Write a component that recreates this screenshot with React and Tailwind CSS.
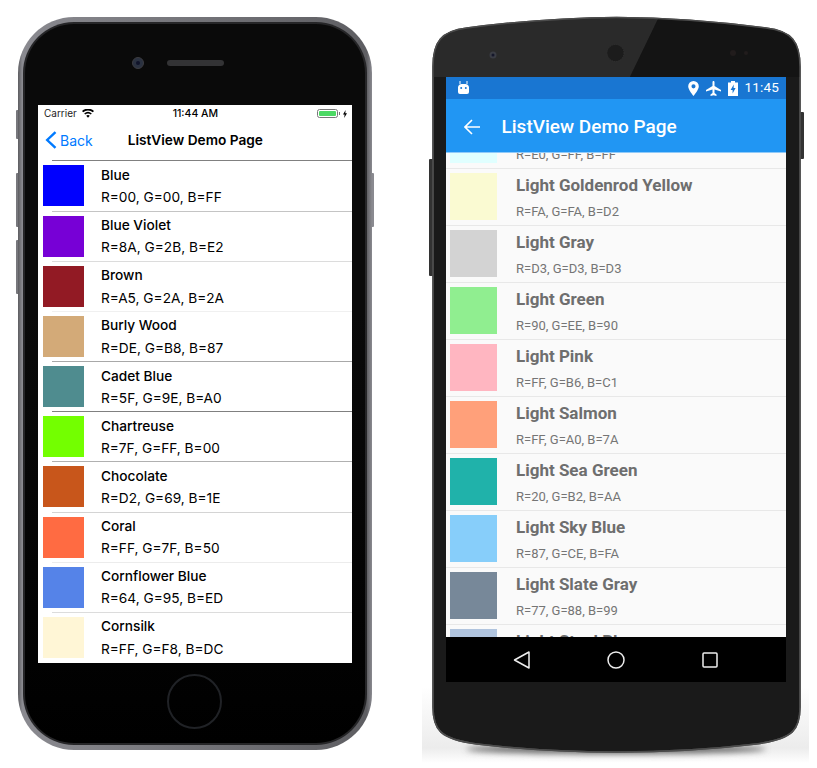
import React from "react";

const iosColors = [
  { name: "Blue", rgb: "R=00, G=00, B=FF", color: "#0000ff", line: "#c4c4c4" },
  { name: "Blue Violet", rgb: "R=8A, G=2B, B=E2", color: "#7700d6", line: "#dcdcdc" },
  { name: "Brown", rgb: "R=A5, G=2A, B=2A", color: "#921a24", line: "#f0f0f0" },
  { name: "Burly Wood", rgb: "R=DE, G=B8, B=87", color: "#d3aa78", line: "#a8a8a8" },
  { name: "Cadet Blue", rgb: "R=5F, G=9E, B=A0", color: "#4f8c8f", line: "#808080" },
  { name: "Chartreuse", rgb: "R=7F, G=FF, B=00", color: "#73ff00", line: "#b0b0b0" },
  { name: "Chocolate", rgb: "R=D2, G=69, B=1E", color: "#c8561b", line: "#d4d4d4" },
  { name: "Coral", rgb: "R=FF, G=7F, B=50", color: "#ff6b42", line: "#ececec" },
  { name: "Cornflower Blue", rgb: "R=64, G=95, B=ED", color: "#5583e8", line: "#dcdcdc" },
  { name: "Cornsilk", rgb: "R=FF, G=F8, B=DC", color: "#fff6d6", line: "#ffffff" },
];

const androidColors = [
  { name: "Light Cyan", rgb: "R=E0, G=FF, B=FF", color: "#e0ffff" },
  { name: "Light Goldenrod Yellow", rgb: "R=FA, G=FA, B=D2", color: "#fafad2" },
  { name: "Light Gray", rgb: "R=D3, G=D3, B=D3", color: "#d3d3d3" },
  { name: "Light Green", rgb: "R=90, G=EE, B=90", color: "#90ee90" },
  { name: "Light Pink", rgb: "R=FF, G=B6, B=C1", color: "#ffb6c1" },
  { name: "Light Salmon", rgb: "R=FF, G=A0, B=7A", color: "#ffa07a" },
  { name: "Light Sea Green", rgb: "R=20, G=B2, B=AA", color: "#20b2aa" },
  { name: "Light Sky Blue", rgb: "R=87, G=CE, B=FA", color: "#87cefa" },
  { name: "Light Slate Gray", rgb: "R=77, G=88, B=99", color: "#778899" },
  { name: "Light Steel Blue", rgb: "R=B0, G=C4, B=DE", color: "#b0c4de" },
];

function IosRow({ item }) {
  return (
    <div className="h-[50.17px] flex flex-col shrink-0">
      <div className="flex-1 flex items-start pl-[5px] pt-[4px]">
        <div className="w-[41px] h-[41px] shrink-0" style={{ backgroundColor: item.color }} />
        <div className="ml-[17px] mt-[-0.5px] flex flex-col text-black font-['Inter',sans-serif]">
          <span className="text-[13.7px] leading-[20px] font-medium">{item.name}</span>
          <span className="text-[13.7px] leading-[20px] mt-[2.3px]">{item.rgb}</span>
        </div>
      </div>
      <div className="h-px ml-[14px]" style={{ backgroundColor: item.line }} />
    </div>
  );
}

function IosStatusBar() {
  return (
    <div className="relative h-[20px] flex items-center pb-[2px] pl-[6px] pr-[5px] text-[10px] font-['Inter',sans-serif] text-black">
      <span className="text-[#222]">Carrier</span>
      <svg className="ml-[5px]" width="12" height="9" viewBox="0 0 12 9" fill="black">
        <path d="M6 8.800 4.200 6.700a2.700 2.700 0 0 1 3.600 0zM3.200 5.600 2.200 4.400a5.800 5.800 0 0 1 7.600 0L8.800 5.600a4.300 4.300 0 0 0-5.600 0zM1.200 3.300 0 2a8.800 8.800 0 0 1 12 0l-1.200 1.300a7.200 7.200 0 0 0-9.600 0z" />
      </svg>
      <span className="flex-1 text-center text-[10.5px] font-medium pr-[20px]">11:44 AM</span>
      <div className="w-[21px] h-[9px] border border-[#777] rounded-[2.5px] p-px">
        <div className="w-full h-full bg-[#4cd964] rounded-[1px]" />
      </div>
      <div className="w-px h-[3px] bg-[#777] ml-px" />
      <svg className="ml-[3px]" width="4" height="8" viewBox="0 0 4 8" fill="black">
        <path d="M2.600 0 0 4.600h1.600L1.200 8 4 3.300H2.300z" />
      </svg>
    </div>
  );
}

function IosNav() {
  return (
    <div className="relative h-[36px] pb-[5px] flex items-center font-['Inter',sans-serif]">
      <svg className="ml-[7px]" width="12" height="18" viewBox="0 0 12 18" fill="none" stroke="#007aff" strokeWidth="2.4">
        <path d="M10.500 1.200 2.200 9l8.300 7.800" />
      </svg>
      <span className="ml-[3px] text-[14px] text-[#007aff]">Back</span>
      <span className="ml-[35px] text-[13.7px] font-semibold text-black">ListView Demo Page</span>
    </div>
  );
}

function IPhone() {
  return (
    <div className="relative w-[354px] h-[733px] shrink-0">
      {/* side buttons */}
      <div className="absolute left-[-2px] top-[93px] w-[3px] h-[29px] bg-[#77777c] rounded-l-[1px]" />
      <div className="absolute left-[-2px] top-[156px] w-[3px] h-[54px] bg-[#77777c] rounded-l-[1px]" />
      <div className="absolute left-[-2px] top-[223px] w-[3px] h-[54px] bg-[#77777c] rounded-l-[1px]" />
      <div className="absolute right-[-2px] top-[156px] w-[3px] h-[54px] bg-[#8a8a90] rounded-r-[1px]" />

      <div className="relative h-full rounded-[56px] p-[5px] bg-[linear-gradient(to_right,#5c5c60,#8a8a90_1.2%,#5e5e62_98.5%,#8a8a90)]">
        <div className="h-full rounded-[51px] p-[2px] bg-[#262628]">
          <div className="h-full rounded-[49px] bg-[linear-gradient(to_bottom,#0a0a0a,#0a0a0a_40%,#000)] pt-[81px] pl-[13px] pr-[13px] flex flex-col">
            <div className="h-[558px] bg-white overflow-hidden flex flex-col shrink-0">
              <IosStatusBar />
              <IosNav />
              <div className="h-px ml-[14px] bg-[#808080]" />
              <div className="flex flex-col">
                {iosColors.map((c) => (
                  <IosRow key={c.name} item={c} />
                ))}
              </div>
            </div>
            {/* home button */}
            <div className="mt-[11px] w-[55px] h-[55px] rounded-full border-2 border-[#202226] ml-[129px]" />
          </div>
        </div>
      </div>

      {/* camera and speaker */}
      <div className="absolute left-[114px] top-[40px] w-[12px] h-[12px] rounded-full bg-[#2a3140] border border-[#3c3c40] flex items-center justify-center">
        <div className="w-[4px] h-[4px] rounded-full bg-[#10142a]" />
      </div>
      <div className="absolute left-[149px] top-[43px] w-[57px] h-[6px] rounded-full bg-[#333335]" />
    </div>
  );
}

function AndroidRow({ item }) {
  return (
    <div className="h-[57px] border-t border-[#e8e8e8] shrink-0 flex items-start pl-[4.5px] pt-[4px]">
      <div className="w-[47px] h-[47px] shrink-0" style={{ backgroundColor: item.color }} />
      <div className="ml-[19px] flex flex-col font-['Roboto',sans-serif]">
        <span className="text-[17px] leading-[24px] font-bold text-[#6e6e6e] whitespace-nowrap">{item.name}</span>
        <span className="text-[13px] leading-[18px] mt-[6px] text-[#757575] whitespace-nowrap">{item.rgb}</span>
      </div>
    </div>
  );
}

function AndroidFrame() {
  const outline =
    "M0 50C0 25 8 14 34 11Q110 1 183.500 .5Q257 1 333 11C359 14 367 25 367 50V690C367 712 361 722 323 727Q257 735 183.500 735Q110 735 44 727C6 722 0 712 0 690Z";
  return (
    <svg className="absolute left-0 top-0 overflow-visible" width="367" height="735" viewBox="0 0 367 735">
      <defs>
        <clipPath id="bodyClip">
          <path d={outline} />
        </clipPath>
        <linearGradient id="fade" x1="0" y1="0" x2="0" y2="1">
          <stop offset="0" stopColor="#ffffff" />
          <stop offset="0.8" stopColor="#ececec" />
          <stop offset="1" stopColor="#ffffff" />
        </linearGradient>
        <filter id="blur" x="-20%" y="-100%" width="140%" height="300%">
          <feGaussianBlur stdDeviation="3" />
        </filter>
      </defs>
      <rect x="-11" y="670" width="387" height="76" fill="url(#fade)" />
      <ellipse cx="183" cy="732" rx="150" ry="5" fill="#666" filter="url(#blur)" />
      <path d={outline} fill="#1a1a1a" stroke="#4c4c4c" strokeWidth="1.5" />
      <polygon points="0,0 226,0 197,60 0,60" fill="#2a2a2a" clipPath="url(#bodyClip)" />
      <polygon points="226,0 367,0 367,60 197,60" fill="#141414" clipPath="url(#bodyClip)" />
      <path d={outline} fill="none" stroke="#4c4c4c" strokeWidth="1.5" />
      <circle cx="60" cy="38" r="3.5" fill="#3a3c44" />
      <circle cx="60" cy="38" r="1.5" fill="#14162a" />
      <circle cx="182.500" cy="36" r="8.500" fill="#1c1c1c" stroke="#333" strokeWidth="1" strokeDasharray="1 1" />
      <circle cx="300" cy="36" r="3" fill="#211c1c" />
      <circle cx="313" cy="36" r="2" fill="#211c1c" />
    </svg>
  );
}

function AndroidStatusBar() {
  return (
    <div className="h-[22px] bg-[#1976d2] flex items-center pl-[11px] pr-[7px] text-white shrink-0">
      <svg width="13" height="14" viewBox="0 0 13 14" fill="white">
        <path d="M1 6a4 4 0 0 1 4-3h3a4 4 0 0 1 4 3v5a2 2 0 0 1-2 2H3a2 2 0 0 1-2-2z" />
        <path d="M3 0v3M10 0v3" stroke="white" strokeWidth="1" />
        <circle cx="4.200" cy="7" r="1" fill="#1976d2" />
        <circle cx="8.800" cy="7" r="1" fill="#1976d2" />
      </svg>
      <svg className="ml-auto" width="11" height="15" viewBox="0 0 11 15" fill="white">
        <path fillRule="evenodd" d="M5.500 0A5.300 5.300 0 0 0 .2 5.300C.2 9 5.500 15 5.500 15s5.300-6 5.300-9.700A5.300 5.300 0 0 0 5.500 0zm0 7.400a2 2 0 1 1 0-4.100 2 2 0 0 1 0 4.100z" />
      </svg>
      <svg className="ml-[7px]" width="15" height="15" viewBox="0 0 15 15" fill="white">
        <path d="M6.500 1.200C6.500.4 7 0 7.500 0s1 .4 1 1.200v3.800l6.500 4v1.500L8.500 8.500v3.500l2 1.500V15l-3-.8-3 .8v-1.500l2-1.500V8.500L0 10.500V9l6.500-4z" />
      </svg>
      <svg className="ml-[7px]" width="10" height="15" viewBox="0 0 10 15" fill="white">
        <path fillRule="evenodd" d="M3 0h4v1.500h3V15H0V1.500h3zM5.800 3.500 2.600 9h2v3.500L7.600 7h-2z" />
      </svg>
      <span className="ml-[6px] text-[13.5px] leading-none tracking-[0.2px] font-['Roboto',sans-serif]">11:45</span>
    </div>
  );
}

function AndroidPhone() {
  return (
    <div className="relative w-[367px] h-[735px] shrink-0">
      <div className="absolute left-[-4px] top-[142px] w-[5px] h-[117px] bg-[#333] rounded-l-[1px]" />
      <div className="absolute right-[-4px] top-[95px] w-[5px] h-[47px] bg-[#333] rounded-r-[1px]" />
      <AndroidFrame />

      <div className="relative pt-[60px] pl-[12.5px] pr-[14px]">
        <div className="h-[605px] flex flex-col overflow-hidden">
          <AndroidStatusBar />
          <div className="h-[54px] pt-[3px] bg-[#2196f3] border-b border-[#90caf9] flex items-center shrink-0 relative z-10">
            <svg className="ml-[18px]" width="16" height="16" viewBox="0 0 16 16" fill="none" stroke="white" strokeWidth="1.6">
              <path d="M16 8H1.500M8 1 1 8l7 7" />
            </svg>
            <span className="ml-[22px] text-[19px] font-medium text-white font-['Roboto',sans-serif]">ListView Demo Page</span>
          </div>
          <div className="h-[484px] bg-[#fafafa] overflow-hidden shrink-0">
            <div className="flex flex-col mt-[-42px]">
              {androidColors.map((c) => (
                <AndroidRow key={c.name} item={c} />
              ))}
            </div>
          </div>
          <div className="h-[45px] bg-black flex items-center shrink-0 pl-[67px]">
            <svg width="17" height="18" viewBox="0 0 17 18" fill="none" stroke="#eee" strokeWidth="1.5">
              <path d="M16 1v16L1.500 9z" strokeLinejoin="round" />
            </svg>
            <svg className="ml-[77px]" width="18" height="18" viewBox="0 0 18 18" fill="none" stroke="#eee" strokeWidth="1.5">
              <circle cx="9" cy="9" r="8" />
            </svg>
            <svg className="ml-[77px]" width="16" height="16" viewBox="0 0 16 16" fill="none" stroke="#eee" strokeWidth="1.5">
              <rect x="1" y="1" width="14" height="14" rx="1" />
            </svg>
          </div>
        </div>
      </div>
    </div>
  );
}

export default function App() {
  return (
    <div className="w-[817px] h-[768px] bg-white overflow-hidden flex items-start pl-[18px] pt-[17px] gap-[61px]">
      <IPhone />
      <AndroidPhone />
    </div>
  );
}
